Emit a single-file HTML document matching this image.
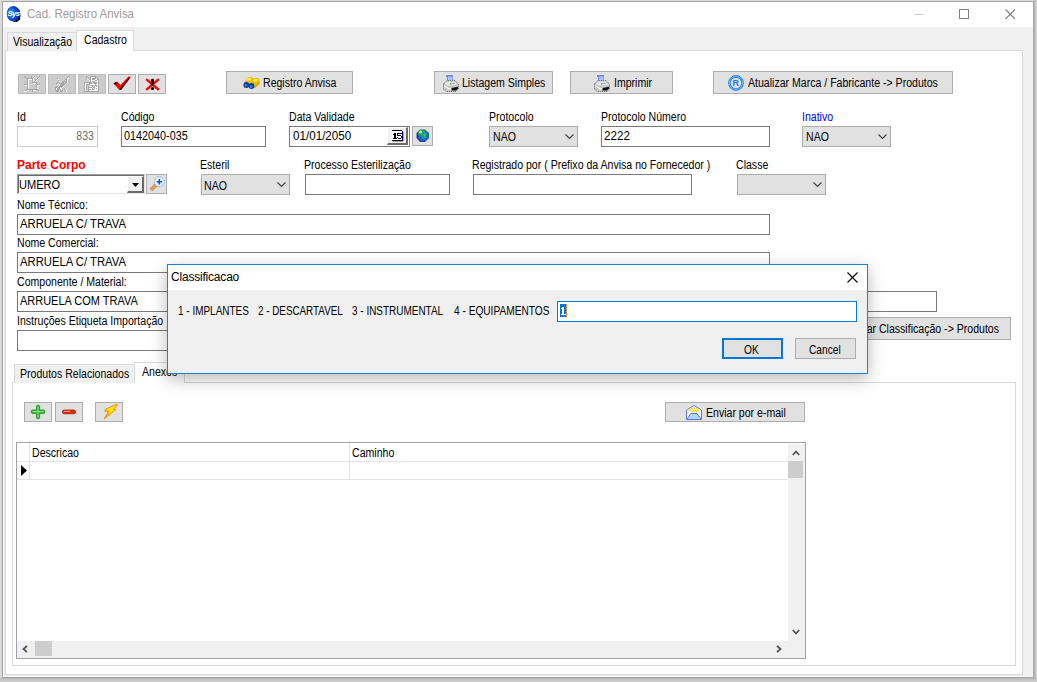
<!DOCTYPE html>
<html><head><meta charset="utf-8">
<style>
*{box-sizing:border-box;margin:0;padding:0}
html,body{width:1037px;height:682px;overflow:hidden;background:#fff}
body{position:relative;font-family:"Liberation Sans",sans-serif;font-size:12px;letter-spacing:0;color:#000}
.a{position:absolute}
svg{position:absolute;overflow:visible}
.t{position:absolute;white-space:nowrap;line-height:13px;margin-top:1px;margin-left:-1px;transform:scaleX(0.88);transform-origin:0 0}
.ed{position:absolute;border:1px solid #7a7a7a;background:#fff}
.bt{position:absolute;border:1px solid #adadad;background:#e1e1e1}
.cb{position:absolute;border:1px solid #adadad;background:#e1e1e1}
.dis{position:absolute;border:1px solid #bcbcbc;background:#cccccc}
.dt{position:absolute;white-space:nowrap;line-height:14px;font-size:12px;letter-spacing:0;transform-origin:0 0}
</style></head><body>
<!-- outer shadow -->
<div class="a" style="left:0;top:0;width:1037px;height:682px;background:#dadada"></div>
<div class="a" style="left:1034px;top:0;width:1px;height:682px;background:#b8b8b8"></div>
<div class="a" style="left:1035px;top:0;width:1px;height:682px;background:#c6c6c6"></div>
<div class="a" style="left:1036px;top:0;width:1px;height:682px;background:#d2d2d2"></div>
<div class="a" style="left:0;top:678px;width:1037px;height:1px;background:#b8b8b8"></div>
<div class="a" style="left:0;top:679px;width:1037px;height:1px;background:#c4c4c4"></div>
<div class="a" style="left:0;top:680px;width:1037px;height:1px;background:#c8c8c8"></div>
<div class="a" style="left:0;top:681px;width:1037px;height:1px;background:#d0d0d0"></div>
<!-- window -->
<div class="a" style="left:2px;top:1px;width:1032px;height:677px;border:1px solid #a4a4a4;background:#f0f0f0"></div>
<div class="a" style="left:3px;top:2px;width:1030px;height:675px;border:1px solid #f4f4f4;border-top:none"></div>
<!-- title bar -->
<div class="a" style="left:3px;top:2px;width:1030px;height:25px;background:#fff"></div>
<svg style="left:5px;top:5px" width="18" height="18" viewBox="0 0 18 18">
<defs><radialGradient id="sysg" cx="0.35" cy="0.45" r="0.7"><stop offset="0" stop-color="#40a8ff"/><stop offset="0.55" stop-color="#1050d8"/><stop offset="1" stop-color="#0828a0"/></radialGradient></defs>
<path d="M8 16.8 L12 17 L15 14.5 L15.5 10 L14.5 5 L13 3.5 L14 8 L12.5 14 L9 16Z" fill="#000"/>
<ellipse cx="8.2" cy="8.8" rx="6.5" ry="7.8" fill="url(#sysg)"/>
<path d="M9 1.5 Q13 2 14 6 L12 5 Q10 3 9 1.5Z" fill="#0a30b0"/>
<text x="2.4" y="10.6" font-family="Liberation Sans" font-weight="bold" font-style="italic" font-size="7.8" fill="#fff" letter-spacing="-0.6">Sys</text>
<path d="M14.3 7 L15.8 8.5 L14.5 10Z" fill="#40c0ff"/>
</svg>
<div class="t" style="left:28px;top:7px;color:#9c9c9c;font-size:12.2px;transform:scaleX(0.94)">Cad. Registro Anvisa</div>
<div class="a" style="left:914px;top:14px;width:10px;height:1px;background:#cfcfcf"></div>
<div class="a" style="left:959px;top:9px;width:10px;height:10px;border:1px solid #808080"></div>
<svg style="left:1005px;top:9px" width="11" height="11" viewBox="0 0 11 11"><path d="M0.5 0.5 L10 10 M10 0.5 L0.5 10" stroke="#808080" stroke-width="1.1"/></svg>

<!-- top tabs -->
<div class="a" style="left:5px;top:50px;width:1018px;height:625px;border:1px solid #d9d9d9;background:#fff"></div>
<div class="a" style="left:7px;top:32px;width:70px;height:19px;border:1px solid #d9d9d9;border-bottom:none;background:#f0f0f0"></div>
<div class="t" style="left:14px;top:35px">Visualização</div>
<div class="a" style="left:76px;top:30px;width:58px;height:21px;border:1px solid #d9d9d9;border-bottom:none;background:#fff"></div>
<div class="t" style="left:85px;top:33px">Cadastro</div>

<!-- toolbar -->
<div class="dis" style="left:18px;top:74px;width:28px;height:20px"></div>
<svg style="left:24px;top:76px" width="16" height="16" shape-rendering="crispEdges"><rect x="0" y="0" width="1" height="1" fill="#a4a4a4"/><rect x="7" y="0" width="1" height="1" fill="#a4a4a4"/><rect x="15" y="0" width="1" height="1" fill="#a4a4a4"/><rect x="1" y="1" width="1" height="1" fill="#a4a4a4"/><rect x="7" y="1" width="1" height="1" fill="#a4a4a4"/><rect x="14" y="1" width="1" height="1" fill="#a4a4a4"/><rect x="2" y="2" width="7" height="1" fill="#a4a4a4"/><rect x="9" y="2" width="1" height="1" fill="#ffffff"/><rect x="13" y="2" width="1" height="1" fill="#a4a4a4"/><rect x="14" y="2" width="1" height="1" fill="#ffffff"/><rect x="3" y="3" width="1" height="1" fill="#a4a4a4"/><rect x="4" y="3" width="4" height="1" fill="#ffffff"/><rect x="8" y="3" width="1" height="1" fill="#a4a4a4"/><rect x="9" y="3" width="1" height="1" fill="#ffffff"/><rect x="12" y="3" width="1" height="1" fill="#a4a4a4"/><rect x="13" y="3" width="1" height="1" fill="#ffffff"/><rect x="3" y="4" width="1" height="1" fill="#a4a4a4"/><rect x="4" y="4" width="1" height="1" fill="#ffffff"/><rect x="8" y="4" width="1" height="1" fill="#a4a4a4"/><rect x="9" y="4" width="1" height="1" fill="#ffffff"/><rect x="11" y="4" width="1" height="1" fill="#a4a4a4"/><rect x="12" y="4" width="1" height="1" fill="#ffffff"/><rect x="3" y="5" width="1" height="1" fill="#a4a4a4"/><rect x="4" y="5" width="1" height="1" fill="#ffffff"/><rect x="8" y="5" width="1" height="1" fill="#a4a4a4"/><rect x="9" y="5" width="1" height="1" fill="#ffffff"/><rect x="10" y="5" width="1" height="1" fill="#a4a4a4"/><rect x="11" y="5" width="1" height="1" fill="#ffffff"/><rect x="3" y="6" width="1" height="1" fill="#a4a4a4"/><rect x="4" y="6" width="1" height="1" fill="#ffffff"/><rect x="8" y="6" width="5" height="1" fill="#a4a4a4"/><rect x="3" y="7" width="1" height="1" fill="#a4a4a4"/><rect x="4" y="7" width="1" height="1" fill="#ffffff"/><rect x="9" y="7" width="3" height="1" fill="#ffffff"/><rect x="12" y="7" width="1" height="1" fill="#a4a4a4"/><rect x="0" y="8" width="4" height="1" fill="#a4a4a4"/><rect x="4" y="8" width="1" height="1" fill="#ffffff"/><rect x="12" y="8" width="4" height="1" fill="#a4a4a4"/><rect x="1" y="9" width="2" height="1" fill="#ffffff"/><rect x="3" y="9" width="1" height="1" fill="#a4a4a4"/><rect x="4" y="9" width="1" height="1" fill="#ffffff"/><rect x="12" y="9" width="1" height="1" fill="#a4a4a4"/><rect x="13" y="9" width="3" height="1" fill="#ffffff"/><rect x="3" y="10" width="1" height="1" fill="#a4a4a4"/><rect x="4" y="10" width="1" height="1" fill="#ffffff"/><rect x="12" y="10" width="1" height="1" fill="#a4a4a4"/><rect x="13" y="10" width="1" height="1" fill="#ffffff"/><rect x="3" y="11" width="1" height="1" fill="#a4a4a4"/><rect x="4" y="11" width="1" height="1" fill="#ffffff"/><rect x="12" y="11" width="1" height="1" fill="#a4a4a4"/><rect x="13" y="11" width="1" height="1" fill="#ffffff"/><rect x="3" y="12" width="1" height="1" fill="#a4a4a4"/><rect x="4" y="12" width="1" height="1" fill="#ffffff"/><rect x="12" y="12" width="1" height="1" fill="#a4a4a4"/><rect x="13" y="12" width="1" height="1" fill="#ffffff"/><rect x="2" y="13" width="12" height="1" fill="#a4a4a4"/><rect x="1" y="14" width="1" height="1" fill="#a4a4a4"/><rect x="3" y="14" width="2" height="1" fill="#ffffff"/><rect x="8" y="14" width="1" height="1" fill="#a4a4a4"/><rect x="9" y="14" width="3" height="1" fill="#ffffff"/><rect x="14" y="14" width="1" height="1" fill="#a4a4a4"/><rect x="0" y="15" width="3" height="1" fill="#ffffff"/><rect x="8" y="15" width="1" height="1" fill="#a4a4a4"/><rect x="15" y="15" width="1" height="1" fill="#ffffff"/></svg>
<div class="dis" style="left:48px;top:74px;width:28px;height:20px"></div>
<svg style="left:54px;top:76px" width="16" height="16" shape-rendering="crispEdges"><rect x="14" y="0" width="1" height="1" fill="#a4a4a4"/><rect x="13" y="1" width="1" height="1" fill="#a4a4a4"/><rect x="14" y="1" width="1" height="1" fill="#ffffff"/><rect x="3" y="2" width="1" height="1" fill="#a4a4a4"/><rect x="12" y="2" width="1" height="1" fill="#a4a4a4"/><rect x="13" y="2" width="2" height="1" fill="#ffffff"/><rect x="4" y="3" width="1" height="1" fill="#ffffff"/><rect x="11" y="3" width="2" height="1" fill="#a4a4a4"/><rect x="13" y="3" width="1" height="1" fill="#ffffff"/><rect x="4" y="4" width="1" height="1" fill="#a4a4a4"/><rect x="10" y="4" width="1" height="1" fill="#a4a4a4"/><rect x="11" y="4" width="1" height="1" fill="#ffffff"/><rect x="12" y="4" width="1" height="1" fill="#a4a4a4"/><rect x="13" y="4" width="1" height="1" fill="#ffffff"/><rect x="5" y="5" width="1" height="1" fill="#ffffff"/><rect x="9" y="5" width="4" height="1" fill="#a4a4a4"/><rect x="13" y="5" width="1" height="1" fill="#ffffff"/><rect x="14" y="5" width="1" height="1" fill="#a4a4a4"/><rect x="3" y="6" width="3" height="1" fill="#a4a4a4"/><rect x="8" y="6" width="2" height="1" fill="#a4a4a4"/><rect x="10" y="6" width="1" height="1" fill="#ffffff"/><rect x="11" y="6" width="2" height="1" fill="#a4a4a4"/><rect x="13" y="6" width="1" height="1" fill="#ffffff"/><rect x="2" y="7" width="2" height="1" fill="#a4a4a4"/><rect x="4" y="7" width="1" height="1" fill="#ffffff"/><rect x="5" y="7" width="1" height="1" fill="#a4a4a4"/><rect x="7" y="7" width="5" height="1" fill="#a4a4a4"/><rect x="12" y="7" width="1" height="1" fill="#ffffff"/><rect x="2" y="8" width="1" height="1" fill="#a4a4a4"/><rect x="3" y="8" width="1" height="1" fill="#ffffff"/><rect x="5" y="8" width="1" height="1" fill="#ffffff"/><rect x="6" y="8" width="5" height="1" fill="#a4a4a4"/><rect x="11" y="8" width="1" height="1" fill="#ffffff"/><rect x="3" y="9" width="1" height="1" fill="#ffffff"/><rect x="4" y="9" width="1" height="1" fill="#a4a4a4"/><rect x="5" y="9" width="1" height="1" fill="#ffffff"/><rect x="6" y="9" width="4" height="1" fill="#a4a4a4"/><rect x="10" y="9" width="1" height="1" fill="#ffffff"/><rect x="2" y="10" width="2" height="1" fill="#a4a4a4"/><rect x="4" y="10" width="1" height="1" fill="#ffffff"/><rect x="5" y="10" width="4" height="1" fill="#a4a4a4"/><rect x="9" y="10" width="1" height="1" fill="#ffffff"/><rect x="1" y="11" width="2" height="1" fill="#a4a4a4"/><rect x="3" y="11" width="1" height="1" fill="#ffffff"/><rect x="4" y="11" width="2" height="1" fill="#a4a4a4"/><rect x="6" y="11" width="1" height="1" fill="#ffffff"/><rect x="7" y="11" width="1" height="1" fill="#a4a4a4"/><rect x="8" y="11" width="1" height="1" fill="#ffffff"/><rect x="1" y="12" width="1" height="1" fill="#a4a4a4"/><rect x="2" y="12" width="1" height="1" fill="#ffffff"/><rect x="3" y="12" width="3" height="1" fill="#a4a4a4"/><rect x="6" y="12" width="2" height="1" fill="#ffffff"/><rect x="8" y="12" width="1" height="1" fill="#a4a4a4"/><rect x="10" y="12" width="1" height="1" fill="#a4a4a4"/><rect x="1" y="13" width="1" height="1" fill="#a4a4a4"/><rect x="2" y="13" width="1" height="1" fill="#ffffff"/><rect x="3" y="13" width="2" height="1" fill="#a4a4a4"/><rect x="6" y="13" width="1" height="1" fill="#a4a4a4"/><rect x="7" y="13" width="1" height="1" fill="#ffffff"/><rect x="10" y="13" width="1" height="1" fill="#a4a4a4"/><rect x="11" y="13" width="1" height="1" fill="#ffffff"/><rect x="1" y="14" width="4" height="1" fill="#a4a4a4"/><rect x="5" y="14" width="1" height="1" fill="#ffffff"/><rect x="6" y="14" width="3" height="1" fill="#a4a4a4"/><rect x="11" y="14" width="1" height="1" fill="#a4a4a4"/><rect x="12" y="14" width="1" height="1" fill="#ffffff"/><rect x="2" y="15" width="3" height="1" fill="#a4a4a4"/><rect x="5" y="15" width="1" height="1" fill="#ffffff"/><rect x="6" y="15" width="2" height="1" fill="#a4a4a4"/><rect x="12" y="15" width="1" height="1" fill="#ffffff"/></svg>
<div class="dis" style="left:78px;top:74px;width:28px;height:20px"></div>
<svg style="left:84px;top:76px" width="16" height="16" shape-rendering="crispEdges"><rect x="2" y="0" width="1" height="1" fill="#a4a4a4"/><rect x="6" y="0" width="6" height="1" fill="#a4a4a4"/><rect x="3" y="1" width="1" height="1" fill="#a4a4a4"/><rect x="6" y="1" width="1" height="1" fill="#a4a4a4"/><rect x="7" y="1" width="4" height="1" fill="#ffffff"/><rect x="11" y="1" width="2" height="1" fill="#a4a4a4"/><rect x="2" y="2" width="1" height="1" fill="#a4a4a4"/><rect x="3" y="2" width="1" height="1" fill="#ffffff"/><rect x="4" y="2" width="1" height="1" fill="#a4a4a4"/><rect x="6" y="2" width="1" height="1" fill="#a4a4a4"/><rect x="7" y="2" width="1" height="1" fill="#ffffff"/><rect x="8" y="2" width="4" height="1" fill="#a4a4a4"/><rect x="12" y="2" width="1" height="1" fill="#ffffff"/><rect x="13" y="2" width="1" height="1" fill="#a4a4a4"/><rect x="4" y="3" width="1" height="1" fill="#ffffff"/><rect x="5" y="3" width="2" height="1" fill="#a4a4a4"/><rect x="7" y="3" width="1" height="1" fill="#ffffff"/><rect x="8" y="3" width="3" height="1" fill="#a4a4a4"/><rect x="11" y="3" width="2" height="1" fill="#ffffff"/><rect x="13" y="3" width="2" height="1" fill="#a4a4a4"/><rect x="5" y="4" width="1" height="1" fill="#ffffff"/><rect x="6" y="4" width="1" height="1" fill="#a4a4a4"/><rect x="7" y="4" width="4" height="1" fill="#ffffff"/><rect x="11" y="4" width="2" height="1" fill="#a4a4a4"/><rect x="13" y="4" width="1" height="1" fill="#ffffff"/><rect x="14" y="4" width="1" height="1" fill="#a4a4a4"/><rect x="6" y="5" width="1" height="1" fill="#a4a4a4"/><rect x="7" y="5" width="1" height="1" fill="#ffffff"/><rect x="8" y="5" width="3" height="1" fill="#a4a4a4"/><rect x="11" y="5" width="3" height="1" fill="#ffffff"/><rect x="14" y="5" width="1" height="1" fill="#a4a4a4"/><rect x="0" y="6" width="8" height="1" fill="#a4a4a4"/><rect x="8" y="6" width="1" height="1" fill="#ffffff"/><rect x="9" y="6" width="4" height="1" fill="#a4a4a4"/><rect x="13" y="6" width="1" height="1" fill="#ffffff"/><rect x="14" y="6" width="1" height="1" fill="#a4a4a4"/><rect x="0" y="7" width="1" height="1" fill="#a4a4a4"/><rect x="1" y="7" width="4" height="1" fill="#ffffff"/><rect x="5" y="7" width="4" height="1" fill="#a4a4a4"/><rect x="9" y="7" width="1" height="1" fill="#ffffff"/><rect x="10" y="7" width="3" height="1" fill="#a4a4a4"/><rect x="13" y="7" width="1" height="1" fill="#ffffff"/><rect x="14" y="7" width="1" height="1" fill="#a4a4a4"/><rect x="0" y="8" width="1" height="1" fill="#a4a4a4"/><rect x="1" y="8" width="1" height="1" fill="#ffffff"/><rect x="2" y="8" width="4" height="1" fill="#a4a4a4"/><rect x="6" y="8" width="5" height="1" fill="#ffffff"/><rect x="11" y="8" width="1" height="1" fill="#a4a4a4"/><rect x="12" y="8" width="2" height="1" fill="#ffffff"/><rect x="14" y="8" width="1" height="1" fill="#a4a4a4"/><rect x="0" y="9" width="1" height="1" fill="#a4a4a4"/><rect x="1" y="9" width="1" height="1" fill="#ffffff"/><rect x="2" y="9" width="1" height="1" fill="#a4a4a4"/><rect x="7" y="9" width="3" height="1" fill="#a4a4a4"/><rect x="10" y="9" width="1" height="1" fill="#ffffff"/><rect x="11" y="9" width="2" height="1" fill="#a4a4a4"/><rect x="13" y="9" width="1" height="1" fill="#ffffff"/><rect x="14" y="9" width="1" height="1" fill="#a4a4a4"/><rect x="0" y="10" width="1" height="1" fill="#a4a4a4"/><rect x="1" y="10" width="1" height="1" fill="#ffffff"/><rect x="2" y="10" width="1" height="1" fill="#a4a4a4"/><rect x="4" y="10" width="1" height="1" fill="#a4a4a4"/><rect x="5" y="10" width="3" height="1" fill="#ffffff"/><rect x="8" y="10" width="1" height="1" fill="#a4a4a4"/><rect x="9" y="10" width="1" height="1" fill="#ffffff"/><rect x="10" y="10" width="1" height="1" fill="#a4a4a4"/><rect x="11" y="10" width="1" height="1" fill="#ffffff"/><rect x="12" y="10" width="1" height="1" fill="#a4a4a4"/><rect x="13" y="10" width="1" height="1" fill="#ffffff"/><rect x="14" y="10" width="1" height="1" fill="#a4a4a4"/><rect x="0" y="11" width="1" height="1" fill="#a4a4a4"/><rect x="1" y="11" width="1" height="1" fill="#ffffff"/><rect x="2" y="11" width="1" height="1" fill="#a4a4a4"/><rect x="4" y="11" width="4" height="1" fill="#a4a4a4"/><rect x="8" y="11" width="1" height="1" fill="#ffffff"/><rect x="9" y="11" width="2" height="1" fill="#a4a4a4"/><rect x="11" y="11" width="3" height="1" fill="#ffffff"/><rect x="14" y="11" width="1" height="1" fill="#a4a4a4"/><rect x="0" y="12" width="1" height="1" fill="#a4a4a4"/><rect x="1" y="12" width="1" height="1" fill="#ffffff"/><rect x="2" y="12" width="1" height="1" fill="#a4a4a4"/><rect x="4" y="12" width="1" height="1" fill="#a4a4a4"/><rect x="5" y="12" width="3" height="1" fill="#ffffff"/><rect x="8" y="12" width="1" height="1" fill="#a4a4a4"/><rect x="9" y="12" width="1" height="1" fill="#ffffff"/><rect x="10" y="12" width="1" height="1" fill="#a4a4a4"/><rect x="11" y="12" width="1" height="1" fill="#ffffff"/><rect x="12" y="12" width="1" height="1" fill="#a4a4a4"/><rect x="13" y="12" width="1" height="1" fill="#ffffff"/><rect x="14" y="12" width="1" height="1" fill="#a4a4a4"/><rect x="0" y="13" width="1" height="1" fill="#a4a4a4"/><rect x="1" y="13" width="1" height="1" fill="#ffffff"/><rect x="2" y="13" width="1" height="1" fill="#a4a4a4"/><rect x="4" y="13" width="3" height="1" fill="#a4a4a4"/><rect x="7" y="13" width="1" height="1" fill="#ffffff"/><rect x="8" y="13" width="2" height="1" fill="#a4a4a4"/><rect x="10" y="13" width="4" height="1" fill="#ffffff"/><rect x="14" y="13" width="1" height="1" fill="#a4a4a4"/><rect x="0" y="14" width="1" height="1" fill="#a4a4a4"/><rect x="1" y="14" width="1" height="1" fill="#ffffff"/><rect x="4" y="14" width="1" height="1" fill="#a4a4a4"/><rect x="5" y="14" width="9" height="1" fill="#ffffff"/><rect x="14" y="14" width="1" height="1" fill="#a4a4a4"/><rect x="0" y="15" width="15" height="1" fill="#a4a4a4"/></svg>
<div class="bt" style="left:108px;top:74px;width:28px;height:20px"></div>
<svg style="left:113px;top:76px" width="18" height="15" viewBox="0 0 18 15">
<path d="M0.5 7.5 L4 5.5 L7.5 9 L15.5 0.5 L17.5 0.5 L17.5 1.5 L8 14 L6.5 14Z" fill="#ff0000"/>
<path d="M17.5 1 L8 14 L6.5 14 L7 12.8 L16.5 1.2Z" fill="#000"/>
<path d="M0.5 7.5 L3 6 L4 7 L1.5 8.5Z" fill="#000"/>
</svg>
<div class="bt" style="left:138px;top:74px;width:28px;height:20px"></div>
<svg style="left:145px;top:78px" width="15" height="13" viewBox="0 0 15 13">
<path d="M1.2 1.2 L13.8 11.8 M13.8 1.2 L1.2 11.8" stroke="#ff0000" stroke-width="2.4"/>
<path d="M5.8 2 Q7.5 -0.5 9.2 2 L8.2 7.8 H6.8Z" fill="#000"/>
<circle cx="7.5" cy="10.5" r="1.6" fill="#000"/>
</svg>

<div class="bt" style="left:226px;top:71px;width:127px;height:23px"></div>
<svg style="left:242px;top:76px" width="18" height="13" viewBox="0 0 18 13">
<path d="M3 5 L6 1 H10 L11 2.5 L13 2 H16.5 L17.5 3.5 V8 L13 12 H10 L3 9Z" fill="#f0c000"/>
<path d="M5.5 2 H9.5 L8 4.5 H4Z M12.5 3 H16 L15 5.5 H11Z" fill="#ffe87a"/>
<path d="M13 12 L17.5 8 V5 L13 9Z" fill="#e0a800"/>
<circle cx="4.3" cy="9" r="2.9" fill="#0c3a8c"/><circle cx="9.5" cy="10" r="2.9" fill="#0c3a8c"/>
<circle cx="3.8" cy="9.2" r="1.3" fill="#2a8ae8"/><circle cx="9" cy="10.6" r="1.3" fill="#2a9af0"/>
</svg>
<div class="t" style="left:264px;top:76px">Registro Anvisa</div>
<div class="bt" style="left:434px;top:71px;width:119px;height:23px"></div>
<svg style="left:443px;top:75px" width="16" height="17" viewBox="0 0 16 17">
<path d="M3 0 H10 V7 H4 V2 H3Z" fill="#7484ea"/><path d="M5 1.5 H9.5 V7 H5Z" fill="#aec2ff"/>
<path d="M0.5 9 L3.8 5.6 H11.8 L15.5 9 V14 L13 16.5 H3 L0.5 14Z" fill="#c6c6c6" stroke="#707070" stroke-width="1" stroke-dasharray="1.2 0.8"/>
<path d="M1.5 9 L4.3 6.6 H11.4 L14.5 9 L11.5 10.6 H4.5Z" fill="#e4e4e4"/>
<path d="M1.2 11.2 L6 14.6 H8.5 V13.2 H6.2 L1.2 10.2Z" fill="#ffffff"/>
<path d="M8.5 13 L15 11.8 V13.8 L12.8 15.6 H8.5Z" fill="#121212"/>
<rect x="7" y="8" width="1.5" height="1.5" fill="#3cbc3c"/><rect x="9.5" y="8" width="2" height="1" fill="#8a9ae8"/>
</svg>
<div class="t" style="left:463px;top:76px">Listagem Simples</div>
<div class="bt" style="left:570px;top:71px;width:103px;height:23px"></div>
<svg style="left:594px;top:75px" width="16" height="17" viewBox="0 0 16 17">
<path d="M3 0 H10 V7 H4 V2 H3Z" fill="#7484ea"/><path d="M5 1.5 H9.5 V7 H5Z" fill="#aec2ff"/>
<path d="M0.5 9 L3.8 5.6 H11.8 L15.5 9 V14 L13 16.5 H3 L0.5 14Z" fill="#c6c6c6" stroke="#707070" stroke-width="1" stroke-dasharray="1.2 0.8"/>
<path d="M1.5 9 L4.3 6.6 H11.4 L14.5 9 L11.5 10.6 H4.5Z" fill="#e4e4e4"/>
<path d="M1.2 11.2 L6 14.6 H8.5 V13.2 H6.2 L1.2 10.2Z" fill="#ffffff"/>
<path d="M8.5 13 L15 11.8 V13.8 L12.8 15.6 H8.5Z" fill="#121212"/>
<rect x="7" y="8" width="1.5" height="1.5" fill="#3cbc3c"/><rect x="9.5" y="8" width="2" height="1" fill="#8a9ae8"/>
</svg>
<div class="t" style="left:615px;top:76px">Imprimir</div>
<div class="bt" style="left:713px;top:71px;width:240px;height:23px"></div>
<svg style="left:728px;top:75px" width="16" height="16" viewBox="0 0 16 16">
<circle cx="8" cy="8" r="6.6" fill="none" stroke="#2b87f3" stroke-width="2.6"/>
<circle cx="8" cy="8" r="6.6" fill="none" stroke="#9cc8ff" stroke-width="0.6"/>
<text x="4.6" y="11.4" font-family="Liberation Sans" font-weight="bold" font-size="9" fill="#1f7af0">R</text>
</svg>
<div class="t" style="left:749px;top:76px">Atualizar Marca / Fabricante -&gt; Produtos</div>

<!-- row 1 -->
<div class="t" style="left:18px;top:110px">Id</div>
<div class="a" style="left:17px;top:126px;width:81px;height:21px;border:1px solid #cccccc;background:#fff"></div>
<div class="t" style="left:55px;top:129px;width:40px;text-align:right;color:#6d6d6d;transform-origin:100% 0">833</div>
<div class="t" style="left:122px;top:110px">Código</div>
<div class="ed" style="left:121px;top:126px;width:145px;height:21px"></div>
<div class="t" style="left:125px;top:129px;transform:scaleX(0.9)">0142040-035</div>
<div class="t" style="left:290px;top:110px">Data Validade</div>
<div class="ed" style="left:289px;top:126px;width:121px;height:21px"></div>
<div class="t" style="left:294px;top:129px;transform:scaleX(0.97)">01/01/2050</div>
<div class="a" style="left:387px;top:127px;width:21px;height:18px;background:#f0f0f0;border-top:1px solid #fff;border-left:1px solid #fff;border-right:2px solid #6a6a6a;border-bottom:2px solid #6a6a6a"></div>
<svg style="left:391px;top:130px" width="13" height="12" shape-rendering="crispEdges"><rect x="1" y="0" width="10" height="1" fill="#000"/><rect x="1" y="1" width="10" height="1" fill="#fff"/><rect x="11" y="1" width="1" height="1" fill="#0000a0"/><rect x="1" y="2" width="10" height="1" fill="#fff"/><rect x="11" y="2" width="1" height="1" fill="#0000a0"/><rect x="12" y="2" width="1" height="1" fill="#a0a0a0"/><rect x="1" y="3" width="2" height="1" fill="#fff"/><rect x="3" y="3" width="2" height="1" fill="#000"/><rect x="5" y="3" width="1" height="1" fill="#fff"/><rect x="6" y="3" width="5" height="1" fill="#000"/><rect x="11" y="3" width="1" height="1" fill="#0000a0"/><rect x="12" y="3" width="1" height="1" fill="#a0a0a0"/><rect x="1" y="4" width="1" height="1" fill="#fff"/><rect x="2" y="4" width="3" height="1" fill="#000"/><rect x="5" y="4" width="1" height="1" fill="#fff"/><rect x="6" y="4" width="1" height="1" fill="#000"/><rect x="7" y="4" width="4" height="1" fill="#fff"/><rect x="11" y="4" width="1" height="1" fill="#0000a0"/><rect x="12" y="4" width="1" height="1" fill="#a0a0a0"/><rect x="1" y="5" width="2" height="1" fill="#fff"/><rect x="3" y="5" width="2" height="1" fill="#000"/><rect x="5" y="5" width="1" height="1" fill="#fff"/><rect x="6" y="5" width="4" height="1" fill="#000"/><rect x="10" y="5" width="1" height="1" fill="#fff"/><rect x="11" y="5" width="1" height="1" fill="#0000a0"/><rect x="12" y="5" width="1" height="1" fill="#a0a0a0"/><rect x="1" y="6" width="2" height="1" fill="#fff"/><rect x="3" y="6" width="2" height="1" fill="#000"/><rect x="5" y="6" width="5" height="1" fill="#fff"/><rect x="10" y="6" width="1" height="1" fill="#000"/><rect x="11" y="6" width="1" height="1" fill="#0000a0"/><rect x="12" y="6" width="1" height="1" fill="#a0a0a0"/><rect x="1" y="7" width="2" height="1" fill="#fff"/><rect x="3" y="7" width="2" height="1" fill="#000"/><rect x="5" y="7" width="1" height="1" fill="#fff"/><rect x="6" y="7" width="1" height="1" fill="#000"/><rect x="7" y="7" width="3" height="1" fill="#fff"/><rect x="10" y="7" width="1" height="1" fill="#000"/><rect x="11" y="7" width="1" height="1" fill="#0000a0"/><rect x="12" y="7" width="1" height="1" fill="#a0a0a0"/><rect x="1" y="8" width="1" height="1" fill="#fff"/><rect x="2" y="8" width="4" height="1" fill="#000"/><rect x="6" y="8" width="1" height="1" fill="#fff"/><rect x="7" y="8" width="3" height="1" fill="#000"/><rect x="10" y="8" width="1" height="1" fill="#fff"/><rect x="11" y="8" width="1" height="1" fill="#0000a0"/><rect x="12" y="8" width="1" height="1" fill="#a0a0a0"/><rect x="1" y="9" width="10" height="1" fill="#fff"/><rect x="11" y="9" width="1" height="1" fill="#0000a0"/><rect x="12" y="9" width="1" height="1" fill="#a0a0a0"/><rect x="1" y="10" width="1" height="1" fill="#000"/><rect x="2" y="10" width="1" height="1" fill="#0000a0"/><rect x="3" y="10" width="1" height="1" fill="#000"/><rect x="4" y="10" width="1" height="1" fill="#0000a0"/><rect x="5" y="10" width="1" height="1" fill="#000"/><rect x="6" y="10" width="1" height="1" fill="#0000a0"/><rect x="7" y="10" width="1" height="1" fill="#000"/><rect x="8" y="10" width="1" height="1" fill="#0000a0"/><rect x="9" y="10" width="2" height="1" fill="#000"/><rect x="11" y="10" width="1" height="1" fill="#0000a0"/><rect x="12" y="10" width="1" height="1" fill="#a0a0a0"/><rect x="2" y="11" width="10" height="1" fill="#a0a0a0"/></svg>
<div class="bt" style="left:412px;top:126px;width:21px;height:20px"></div>
<svg style="left:416px;top:129px" width="14" height="14" viewBox="0 0 14 14">
<defs><radialGradient id="glg" cx="0.6" cy="0.45" r="0.6"><stop offset="0" stop-color="#38c8ff"/><stop offset="0.5" stop-color="#1a6ee0"/><stop offset="1" stop-color="#1838a8"/></radialGradient></defs>
<path d="M4 0.5 H9 L13 4 V9 L9 13 H4 L0.5 9 V4Z" fill="url(#glg)"/>
<path d="M3.5 1 H8 L9 2.5 L7.5 5 L8 8.5 L6.5 10.5 L5.5 7.5 L3 6 L1.5 3.5Z" fill="#22a832"/>
<path d="M10 3.5 L12.8 5 V8.5 L10.5 7Z" fill="#168a28"/>
<circle cx="4.5" cy="3" r="1.5" fill="#b0f8b0"/>
</svg>
<div class="t" style="left:490px;top:110px">Protocolo</div>
<div class="cb" style="left:489px;top:126px;width:89px;height:21px"></div>
<svg style="left:565px;top:134px" width="9" height="5" viewBox="0 0 9 5"><path d="M0.5 0.5 L4.5 4.5 L8.5 0.5" fill="none" stroke="#404040" stroke-width="1.1"/></svg>
<div class="t" style="left:494px;top:130px">NAO</div>
<div class="t" style="left:602px;top:110px">Protocolo Número</div>
<div class="ed" style="left:601px;top:126px;width:169px;height:21px"></div>
<div class="t" style="left:605px;top:129px;transform:scaleX(0.97)">2222</div>
<div class="t" style="left:803px;top:110px;color:#0000ff">Inativo</div>
<div class="cb" style="left:802px;top:126px;width:89px;height:21px"></div>
<svg style="left:878px;top:134px" width="9" height="5" viewBox="0 0 9 5"><path d="M0.5 0.5 L4.5 4.5 L8.5 0.5" fill="none" stroke="#404040" stroke-width="1.1"/></svg>
<div class="t" style="left:807px;top:130px">NAO</div>

<!-- row 2 -->
<div class="t" style="left:18px;top:158px;color:#f00;font-weight:bold;transform:none">Parte Corpo</div>
<div class="t" style="left:201px;top:158px">Esteril</div>
<div class="cb" style="left:201px;top:174px;width:89px;height:21px"></div>
<svg style="left:277px;top:182px" width="9" height="5" viewBox="0 0 9 5"><path d="M0.5 0.5 L4.5 4.5 L8.5 0.5" fill="none" stroke="#404040" stroke-width="1.1"/></svg>
<div class="t" style="left:205px;top:179px">NAO</div>
<div class="t" style="left:305px;top:158px">Processo Esterilização</div>
<div class="ed" style="left:305px;top:174px;width:145px;height:21px"></div>
<div class="t" style="left:473px;top:158px">Registrado por ( Prefixo da Anvisa no Fornecedor )</div>
<div class="ed" style="left:473px;top:174px;width:219px;height:21px"></div>
<div class="t" style="left:737px;top:158px">Classe</div>
<div class="cb" style="left:737px;top:174px;width:89px;height:21px"></div>
<svg style="left:813px;top:182px" width="9" height="5" viewBox="0 0 9 5"><path d="M0.5 0.5 L4.5 4.5 L8.5 0.5" fill="none" stroke="#404040" stroke-width="1.1"/></svg>

<!-- parte corpo combo -->
<div class="a" style="left:17px;top:174px;width:128px;height:20px;border-top:1px solid #a0a0a0;border-left:1px solid #a0a0a0;border-right:1px solid #e3e3e3;border-bottom:1px solid #e3e3e3;background:#fff;box-shadow:inset 1px 1px 0 #696969"></div>
<div class="a" style="left:127px;top:176px;width:17px;height:17px;background:#f0f0f0;border-top:1px solid #fff;border-left:1px solid #fff;border-right:2px solid #6a6a6a;border-bottom:2px solid #6a6a6a"></div>
<svg style="left:132px;top:183px" width="7" height="4" viewBox="0 0 7 4"><path d="M0 0 H7 L3.5 4Z" fill="#000"/></svg>
<div class="t" style="left:20px;top:178px;transform:scaleX(0.92)">UMERO</div>
<div class="bt" style="left:146px;top:174px;width:21px;height:20px"></div>
<svg style="left:149px;top:176px" width="16" height="16" viewBox="0 0 16 16">
<path d="M2 14 L6.8 9.2" stroke="#8a80d8" stroke-width="3.8"/>
<path d="M2 14 L6.8 9.2" stroke="#f0a030" stroke-width="2.8"/>
<circle cx="10.3" cy="5.7" r="5" fill="#d8f4ff" stroke="#8890d8" stroke-width="0.9" stroke-dasharray="1 0.7"/>
<circle cx="9.5" cy="4.5" r="2.5" fill="#f4fcff"/>
<path d="M10.3 3 V8.4 M7.6 5.7 H13" stroke="#1a4fc0" stroke-width="1.6"/>
</svg>

<!-- nome tecnico etc -->
<div class="t" style="left:18px;top:198px">Nome Técnico:</div>
<div class="ed" style="left:17px;top:214px;width:753px;height:21px"></div>
<div class="t" style="left:21px;top:217px;transform:scaleX(0.94)">ARRUELA C/ TRAVA</div>
<div class="t" style="left:18px;top:236px">Nome Comercial:</div>
<div class="ed" style="left:17px;top:252px;width:753px;height:21px"></div>
<div class="t" style="left:21px;top:255px;transform:scaleX(0.94)">ARRUELA C/ TRAVA</div>
<div class="t" style="left:18px;top:275px">Componente / Material:</div>
<div class="ed" style="left:17px;top:291px;width:920px;height:21px"></div>
<div class="t" style="left:21px;top:294px;transform:scaleX(0.915)">ARRUELA COM TRAVA</div>
<div class="t" style="left:18px;top:314px">Instruções Etiqueta Importação</div>
<div class="ed" style="left:17px;top:330px;width:840px;height:21px"></div>
<div class="bt" style="left:700px;top:317px;width:311px;height:23px"></div>
<div class="t" style="left:800px;top:322px;width:200px;text-align:right;transform-origin:100% 0">Atualizar Classificação -&gt; Produtos</div>

<!-- lower tabs -->
<div class="a" style="left:12px;top:382px;width:1004px;height:284px;border:1px solid #d9d9d9;background:#fff"></div>
<div class="a" style="left:14px;top:364px;width:121px;height:19px;border:1px solid #d9d9d9;border-bottom:none;background:#f0f0f0"></div>
<div class="t" style="left:21px;top:367px">Produtos Relacionados</div>
<div class="a" style="left:134px;top:362px;width:51px;height:21px;border:1px solid #d9d9d9;border-bottom:none;background:#fff"></div>
<div class="t" style="left:143px;top:365px">Anexos</div>

<div class="bt" style="left:24px;top:402px;width:28px;height:20px"></div>
<svg style="left:31px;top:405px" width="15" height="14" viewBox="0 0 15 14">
<path d="M5.5 1.2 Q5.5 0.3 7 0.3 Q8.6 0.3 8.6 1.2 V5 H12.8 Q13.8 5 13.8 6.8 Q13.8 8.6 12.8 8.6 H8.6 V12.8 Q8.6 13.7 7 13.7 Q5.5 13.7 5.5 12.8 V8.6 H1.2 Q0.3 8.6 0.3 6.8 Q0.3 5 1.2 5 H5.5Z" fill="#3cb83c" stroke="#1f8a1f" stroke-width="0.8"/>
<path d="M7 1.5 V12.5 M1.5 6.5 H12.5" stroke="#9ef09e" stroke-width="0.9" opacity="0.8"/>
</svg>
<div class="bt" style="left:55px;top:402px;width:28px;height:20px"></div>
<svg style="left:62px;top:409px" width="14" height="6" viewBox="0 0 14 6">
<rect x="0.4" y="1" width="13.2" height="3.8" rx="1.9" fill="#e02a08" stroke="#a81800" stroke-width="0.8"/>
<path d="M2 2.3 H8" stroke="#ffb8a0" stroke-width="0.9"/>
</svg>
<div class="bt" style="left:95px;top:402px;width:28px;height:20px"></div>
<svg style="left:103px;top:403px" width="15" height="17" viewBox="0 0 15 17">
<defs><linearGradient id="blt" x1="0.8" y1="0" x2="0.1" y2="1"><stop offset="0" stop-color="#ffd000"/><stop offset="0.4" stop-color="#fff000"/><stop offset="1" stop-color="#ff8a00"/></linearGradient></defs>
<path d="M14 1 L2 6.5 L2 8.5 L5.5 8.5 L1 16 L13 6.5 L10.5 6.5 L14 2.5Z" fill="url(#blt)" stroke="#f08a10" stroke-width="0.9" stroke-linejoin="round"/>
</svg>
<div class="bt" style="left:665px;top:402px;width:140px;height:20px"></div>
<svg style="left:686px;top:405px" width="16" height="15" viewBox="0 0 16 15">
<path d="M0.5 5 L8 0.5 L15.5 5 V14.5 H0.5Z" fill="#e8f4ff" stroke="#6b70d0" stroke-width="1"/>
<path d="M1 5 Q8 0 15 5 L8 8Z" fill="#ffe060"/>
<path d="M1 5.5 L8 8 L15 5.5 L14 7 L8 9 L2 7Z" fill="#fff"/>
<path d="M1 14 L5 8.5 H11 L15 14Z" fill="#a8d8ff"/>
<path d="M1 14 L5 8.5 H11 L15 14" fill="none" stroke="#6b70d0" stroke-width="1"/>
</svg>
<div class="t" style="left:707px;top:406px">Enviar por e-mail</div>

<!-- grid -->
<div class="a" style="left:16px;top:442px;width:790px;height:217px;border:1px solid #a0a0a8;background:#fff"></div>
<div class="a" style="left:17px;top:461px;width:770px;height:1px;background:#e3e3e3"></div>
<div class="a" style="left:17px;top:479px;width:770px;height:1px;background:#e3e3e3"></div>
<div class="a" style="left:29px;top:444px;width:1px;height:36px;background:#e3e3e3"></div>
<div class="a" style="left:349px;top:444px;width:1px;height:36px;background:#e3e3e3"></div>
<div class="t" style="left:33px;top:446px">Descricao</div>
<div class="t" style="left:353px;top:446px">Caminho</div>
<svg style="left:21px;top:465px" width="6" height="11" viewBox="0 0 6 11"><path d="M0 0 L6 5.5 L0 11Z" fill="#000"/></svg>
<!-- scrollbars -->
<div class="a" style="left:788px;top:444px;width:17px;height:214px;background:#f0f0f0"></div>
<div class="a" style="left:788px;top:461px;width:15px;height:17px;background:#cdcdcd"></div>
<svg style="left:792px;top:450px" width="8" height="6" viewBox="0 0 8 6"><path d="M0.8 5 L4 1.5 L7.2 5" fill="none" stroke="#505050" stroke-width="1.8"/></svg>
<svg style="left:792px;top:629px" width="8" height="6" viewBox="0 0 8 6"><path d="M0.8 1 L4 4.5 L7.2 1" fill="none" stroke="#505050" stroke-width="1.8"/></svg>
<div class="a" style="left:17px;top:641px;width:771px;height:17px;background:#f0f0f0"></div>
<div class="a" style="left:35px;top:641px;width:17px;height:15px;background:#cdcdcd"></div>
<svg style="left:22px;top:645px" width="6" height="8" viewBox="0 0 6 8"><path d="M5 0.8 L1.5 4 L5 7.2" fill="none" stroke="#505050" stroke-width="1.8"/></svg>
<svg style="left:776px;top:645px" width="6" height="8" viewBox="0 0 6 8"><path d="M1 0.8 L4.5 4 L1 7.2" fill="none" stroke="#505050" stroke-width="1.8"/></svg>

<!-- dialog -->
<div class="a" style="left:167px;top:264px;width:701px;height:110px;border:1px solid #1883d7;background:#f0f0f0;box-shadow:0 5px 16px rgba(0,0,0,0.28)"></div>
<div class="a" style="left:168px;top:265px;width:699px;height:25px;background:#fff"></div>
<div class="dt" style="left:171px;top:270px;letter-spacing:-0.2px">Classificacao</div>
<svg style="left:847px;top:272px" width="11" height="11" viewBox="0 0 11 11"><path d="M0.5 0.5 L10.5 10.5 M10.5 0.5 L0.5 10.5" stroke="#000" stroke-width="1.1"/></svg>
<div class="dt" style="left:178px;top:304px;transform:scaleX(0.83)">1 - IMPLANTES</div>
<div class="dt" style="left:258px;top:304px;transform:scaleX(0.82)">2 - DESCARTAVEL</div>
<div class="dt" style="left:352px;top:304px;transform:scaleX(0.83)">3 - INSTRUMENTAL</div>
<div class="dt" style="left:454px;top:304px;transform:scaleX(0.845)">4 - EQUIPAMENTOS</div>
<div class="a" style="left:557px;top:301px;width:300px;height:21px;border:1px solid #0078d7;background:#fff"></div>
<div class="a" style="left:560px;top:304px;width:6px;height:13px;background:#0078d7"></div>
<svg style="left:561px;top:307px" width="5" height="9" shape-rendering="crispEdges"><rect x="1" y="0" width="2" height="8" fill="#fff"/><rect x="0" y="1" width="1" height="1" fill="#fff"/><rect x="0" y="7" width="5" height="1" fill="#fff"/></svg>
<div class="a" style="left:566px;top:304px;width:1px;height:13px;background:#f58a30"></div>
<div class="a" style="left:722px;top:338px;width:61px;height:21px;border:2px solid #0078d7;background:#e1e1e1"></div>
<div class="dt" style="left:744px;top:343px;transform:scaleX(0.85)">OK</div>
<div class="bt" style="left:795px;top:338px;width:61px;height:21px"></div>
<div class="dt" style="left:809px;top:343px;transform:scaleX(0.85)">Cancel</div>

</body></html>
